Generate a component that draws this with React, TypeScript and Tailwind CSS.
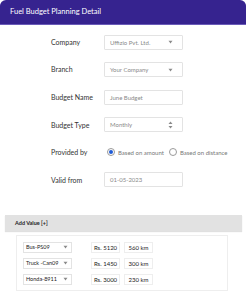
import React from 'react'

const Caret = () => (
    <svg width="5" height="4" viewBox="0 0 5 4" className="shrink-0">
        <path d="M0.5 0.8 L4.5 0.8 L2.5 3.4 Z" fill="#8a8a8a" />
    </svg>
)

const SortIcon = () => (
    <svg width="5" height="8" viewBox="0 0 5 8" className="shrink-0">
        <path d="M2.5 0.5 L4.5 3 L0.5 3 Z" fill="#8a8a8a" />
        <path d="M0.5 5 L4.5 5 L2.5 7.5 Z" fill="#8a8a8a" />
    </svg>
)

const FieldRow = (props: { label: string; children: any }) => {
    const { label, children } = props
    return (
        <div className="flex items-center h-[14px]">
            <div className="w-[53px] text-[7px] text-[#333]">{label}</div>
            {children}
        </div>
    )
}

const Box = (props: { text: string; icon?: any }) => {
    const { text, icon } = props
    return (
        <div className="w-[79px] h-[15px] border border-[#e3e3e3] rounded-[1px] bg-white flex items-center justify-between pl-[5px] pr-[9px] text-[6px] text-[#8a8a8a]">
            <span>{text}</span>
            {icon}
        </div>
    )
}

const Radio = (props: { checked?: boolean; label: string }) => {
    const { checked, label } = props
    return (
        <div className="flex items-center gap-[3px]">
            <div className="w-[8px] h-[8px] rounded-full border border-[#9a9a9a] flex items-center justify-center bg-white">
                {checked && <div className="w-[4px] h-[4px] rounded-full bg-[#1f5bd6]" />}
            </div>
            <span className="text-[6px] text-[#777]">{label}</span>
        </div>
    )
}

const vehicles = [
    { name: 'Bus-PS09', amount: 'Rs. 5120', dist: '560 km' },
    { name: 'Truck -Can09', amount: 'Rs. 1450', dist: '300 km' },
    { name: 'Honda-8911', amount: 'Rs. 3000', dist: '230 km' },
]

export default function App() {
    return (
        <div className="w-[247px] h-[300px] bg-white overflow-hidden" style={{ fontFamily: 'Lato, "Open Sans", sans-serif' }}>
            <div className="w-[246px] h-[24px] bg-[#36238f] rounded-t-[6px] flex items-center pl-[10px] text-white text-[7.5px] shadow-[0_1px_0_#6a5bb8]">
                Fuel Budget Planning Detail
            </div>

            <div className="flex flex-col gap-[13.6px] pl-[51px] pt-[11px]">
                <FieldRow label="Company">
                    <Box text="Uffizio Pvt. Ltd." icon={<Caret />} />
                </FieldRow>
                <FieldRow label="Branch">
                    <Box text="Your Company" icon={<Caret />} />
                </FieldRow>
                <FieldRow label="Budget Name">
                    <Box text="June Budget" />
                </FieldRow>
                <FieldRow label="Budget Type">
                    <Box text="Monthly" icon={<SortIcon />} />
                </FieldRow>
                <FieldRow label="Provided by">
                    <div className="flex items-center gap-[5px] pl-[3px]">
                        <Radio checked label="Based on amount" />
                        <Radio label="Based on distance" />
                    </div>
                </FieldRow>
                <FieldRow label="Valid from">
                    <Box text="01-05-2023" />
                </FieldRow>
            </div>

            <div className="mx-[5px] mt-[28px] h-[16px] bg-[#e2e2e2] flex items-center pl-[10px] text-[5.5px] font-bold text-[#222] shadow-[0_1px_1px_rgba(0,0,0,0.12)]">
                Add Value [+]
            </div>

            <div className="ml-[16px] mt-[4px] w-[212px] h-[56px] border border-[#eeeeee] bg-white flex flex-col gap-[5px] pl-[6px] pt-[6px]">
                {vehicles.map((v) => (
                    <div key={v.name} className="flex items-center h-[11px]">
                        <div className="w-[49px] h-[11px] border border-[#e3e3e3] flex items-center justify-between pl-[2px] pr-[3px] text-[5.5px] text-[#222]">
                            <span>{v.name}</span>
                            <Caret />
                        </div>
                        <div className="ml-[19px] w-[29px] h-[11px] border border-[#eeeeee] flex items-center justify-center text-[6px] text-[#222]">
                            {v.amount}
                        </div>
                        <div className="ml-[4px] w-[29px] h-[11px] border border-[#eeeeee] flex items-center justify-center text-[6px] text-[#222]">
                            {v.dist}
                        </div>
                    </div>
                ))}
            </div>
        </div>
    )
}
